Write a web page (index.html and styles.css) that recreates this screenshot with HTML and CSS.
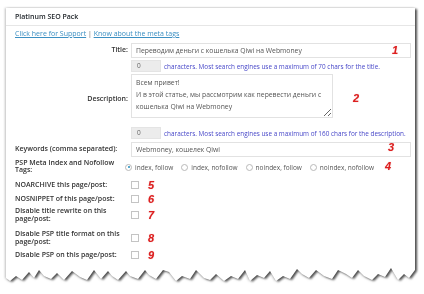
FILE: index.html
```html
<!DOCTYPE html>
<html>
<head>
<meta charset="utf-8">
<link rel="stylesheet" href="styles.css">
</head>
<body>
<div class="paper">
  <div class="card">
    <div class="hdr">Platinum SEO Pack</div>
    <div class="inside">
      <p class="links"><a href="#">Click here for Support</a> | <a href="#">Know about the meta tags</a></p>
      <div class="form">
        <div class="row r-title">
          <label class="lbl right">Title:</label>
          <div class="fld"><input class="txt wide" type="text" value="Переводим деньги с кошелька Qiwi на Webmoney"><span class="mark m1">1</span></div>
        </div>
        <div class="row r-chars1">
          <div class="lbl"></div>
          <div class="fld"><span class="count">0</span><span class="hint">characters. Most search engines use a maximum of 70 chars for the title.</span></div>
        </div>
        <div class="row r-desc">
          <label class="lbl right">Description:</label>
          <div class="fld"><textarea class="area">Всем привет!
И в этой статье, мы рассмотрим как перевести деньги с кошелька Qiwi на Webmoney</textarea><span class="mark m2">2</span></div>
        </div>
        <div class="row r-chars2">
          <div class="lbl"></div>
          <div class="fld"><span class="count">0</span><span class="hint">characters. Most search engines use a maximum of 160 chars for the description.</span></div>
        </div>
        <div class="row r-kw">
          <label class="lbl">Keywords (comma separated):</label>
          <div class="fld"><input class="txt wide" type="text" value="Webmoney, кошелек Qiwi"><span class="mark m3">3</span></div>
        </div>
        <div class="row r-radio">
          <label class="lbl">PSP Meta Index and Nofollow<br>Tags:</label>
          <div class="fld radios">
            <span class="opt"><span class="radio on"></span>index, follow</span>
            <span class="opt"><span class="radio"></span>index, nofollow</span>
            <span class="opt"><span class="radio"></span>noindex, follow</span>
            <span class="opt"><span class="radio"></span>noindex, nofollow</span>
            <span class="mark m4">4</span>
          </div>
        </div>
        <div class="row r-cb1">
          <label class="lbl">NOARCHIVE this page/post:</label>
          <div class="fld"><span class="cb"></span><span class="mark mi">5</span></div>
        </div>
        <div class="row r-cb2">
          <label class="lbl">NOSNIPPET of this page/post:</label>
          <div class="fld"><span class="cb"></span><span class="mark mi">6</span></div>
        </div>
        <div class="row r-cb3">
          <label class="lbl">Disable title rewrite on this<br>page/post:</label>
          <div class="fld"><span class="cb"></span><span class="mark mi">7</span></div>
        </div>
        <div class="row r-cb4">
          <label class="lbl">Disable PSP title format on this<br>page/post:</label>
          <div class="fld"><span class="cb"></span><span class="mark mi">8</span></div>
        </div>
        <div class="row r-cb5">
          <label class="lbl">Disable PSP on this page/post:</label>
          <div class="fld"><span class="cb"></span><span class="mark mi">9</span></div>
        </div>
      </div>
    </div>
  </div>
</div>
</body>
</html>
```
FILE: styles.css
```css
* { box-sizing: border-box; }
html, body { margin: 0; padding: 0; background: #fff; }
body {
  font-family: "Open Sans", "Noto Sans", sans-serif;
  font-size: 7px;
  color: #444;
  width: 424px;
  height: 294px;
  overflow: hidden;
}
.paper {
  margin: 8px 0 0 6px;
  width: 409px;
  filter: drop-shadow(2.5px 1px 1.2px rgba(0,0,0,.65)) drop-shadow(-1px 0 0.8px rgba(0,0,0,.25));
}
.card {
  background: #fff;
  height: 275px;
  clip-path: polygon(0 0, 409px 0, 409px 262px, 403px 270px, 398px 266px, 392px 272px, 385px 260px, 379px 269px, 372px 266px, 366px 272px, 358px 268px, 352px 262px, 346px 270px, 340px 266px, 332px 262px, 326px 271px, 318px 268px, 310px 262px, 303px 270px, 296px 266px, 291px 261px, 284px 271px, 277px 268px, 270px 273px, 264px 263px, 258px 270px, 251px 267px, 244px 273px, 239px 262px, 232px 271px, 225px 268px, 218px 273px, 210px 266px, 204px 272px, 198px 270px, 190px 262px, 184px 271px, 176px 268px, 170px 273px, 163px 264px, 157px 262px, 150px 271px, 143px 267px, 139px 262px, 132px 271px, 124px 268px, 120px 263px, 112px 272px, 106px 268px, 102px 263px, 95px 271px, 88px 262px, 81px 272px, 74px 269px, 66px 263px, 58px 272px, 51px 265px, 45px 271px, 38px 268px, 33px 262px, 28px 270px, 23px 264px, 16px 272px, 10px 268px, 4px 273px, 0 270px);
}
.hdr {
  height: 18px;
  line-height: 17px;
  padding-left: 9px;
  font-size: 7px;
  font-weight: 600;
  color: #23282d;
  border-bottom: 1px solid #e6e6e6;
}
.inside { padding: 0 3px 0 9px; }
.links {
  margin: 4px 0 0;
  line-height: 8px;
  height: 8px;
  color: #666;
}
.links a { color: #3b8fc2; text-decoration: underline; }
.form { display: flex; flex-direction: column; }
.row { display: flex; align-items: center; gap: 3px; position: relative; }
.lbl {
  width: 113px;
  flex: none;
  font-weight: 600;
  color: #333;
  line-height: 8.5px;
  white-space: nowrap;
}
.lbl.right { text-align: right; }
.fld { display: flex; align-items: center; flex: 1; position: relative; }
.txt {
  font: inherit;
  font-size: 6.8px;
  color: #555;
  border: 1px solid #e2e2e2;
  background: #fff;
  height: 15px;
  padding: 0 4px;
  margin: 0;
  outline: none;
}
.wide { width: 280px; }
.count {
  width: 30px;
  height: 12px;
  background: #ececec;
  border: 1px solid #e4e4e4;
  line-height: 10px;
  padding-left: 5px;
  color: #666;
  flex: none;
  font-size: 6.5px;
}
.hint { color: #4646c8; margin-left: 3px; white-space: nowrap; font-size: 6.4px; }
.area {
  font: inherit;
  font-size: 6.8px;
  color: #555;
  width: 202px;
  height: 44px;
  border: 1px solid #e2e2e2;
  padding: 2px 4px;
  margin: 0;
  line-height: 12px;
  resize: vertical;
  overflow: hidden;
  outline: none;
}
.r-title { margin-top: 5px; height: 15px; }
.r-chars1 { margin-top: 2px; height: 12px; }
.r-desc { margin-top: 2px; height: 44px; }
.r-desc .lbl { padding-top: 6px; }
.r-chars2 { margin-top: 9px; height: 12px; }
.r-kw { margin-top: 3px; height: 15px; }
.r-radio { margin-top: 1px; height: 16px; }
.r-radio .lbl { line-height: 7.5px; }
.r-cb1 { margin-top: 6px; height: 10px; }
.r-cb2 { margin-top: 4px; height: 10px; }
.r-cb3 { margin-top: 2.5px; height: 17px; }
.r-cb4 { margin-top: 6px; height: 17px; }
.r-cb5 { margin-top: 3.5px; height: 10px; }
.radios { gap: 8px; color: #555; font-size: 6.5px; padding-top: 2px; }
.opt { display: inline-flex; align-items: center; gap: 3px; white-space: nowrap; }
.radios .opt:first-child { margin-left: -6px; }
.radio {
  width: 7px; height: 7px;
  border: 1px solid #b8b8b8;
  border-radius: 50%;
  background: #fff;
  position: relative;
}
.radio.on::after {
  content: "";
  position: absolute;
  left: 1.5px; top: 1.5px;
  width: 2px; height: 2px;
  border-radius: 50%;
  background: #1e8cbe;
}
.cb {
  width: 8px; height: 8px;
  border: 1px solid #c4c4c4;
  background: #fff;
  flex: none;
}
.mark {
  font-family: "Liberation Sans", Arial, sans-serif;
  font-weight: bold;
  font-style: italic;
  font-size: 11px;
  color: #dd1f1f;
  text-shadow: 0 0 1px rgba(200,0,0,.4);
  line-height: 10px;
}
.m1 { position: absolute; left: 261px; top: 2px; }
.m2 { position: absolute; left: 222px; top: 19px; }
.m3 { position: absolute; left: 257px; top: 0px; }
.m4 { position: absolute; left: 254px; top: 0px; }
.mi { margin-left: 9px; }
```
